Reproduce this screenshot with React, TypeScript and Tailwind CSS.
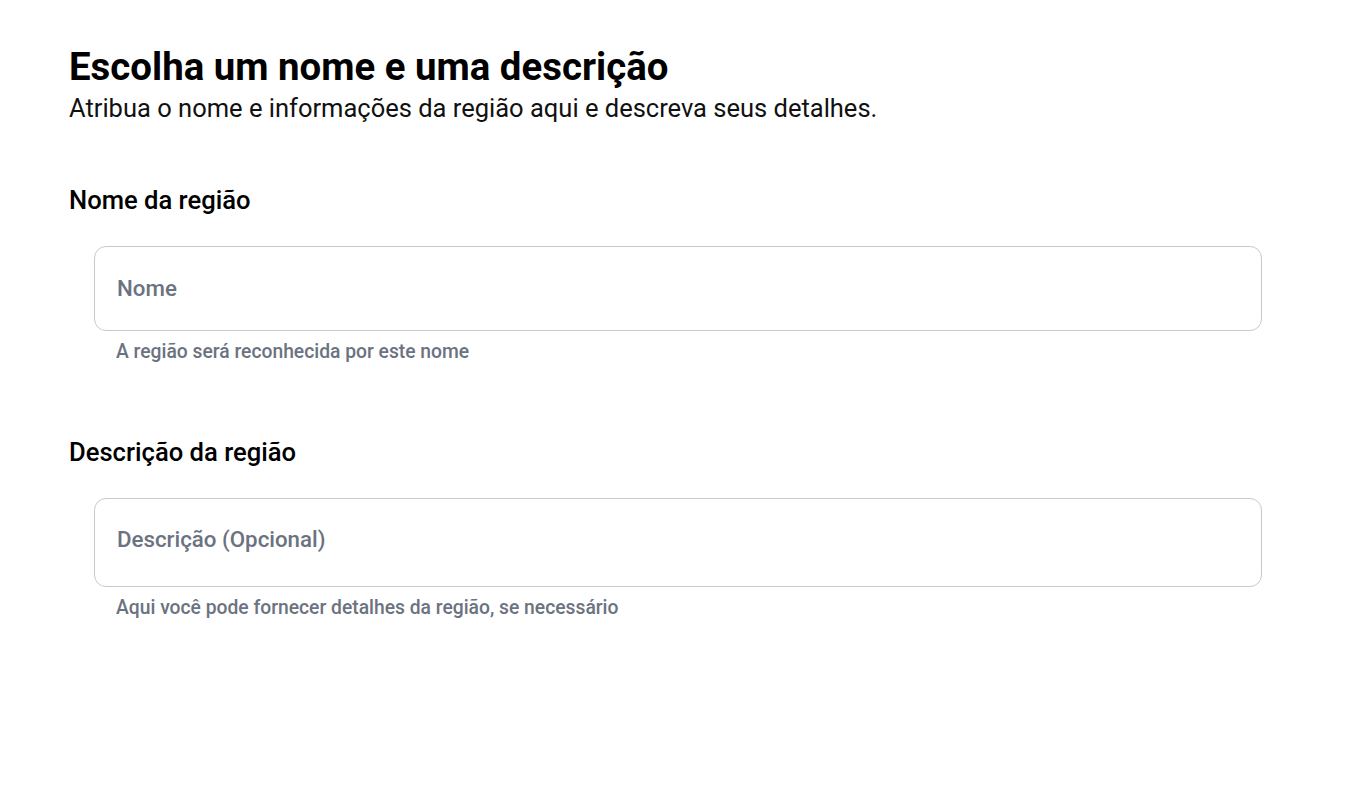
const FONT = "font-['Roboto','Liberation_Sans',sans-serif]";

function Field({
  label,
  placeholder,
  hint,
  box,
}: {
  label: string;
  placeholder: string;
  hint: string;
  box: string;
}) {
  return (
    <section>
      <h2 className="text-[25.6px] leading-[30px] font-medium text-black">{label}</h2>
      <div className="mt-[31px] ml-[25px] mr-[21px]">
        <div
          className={`${box} flex items-center rounded-[12px] border border-[#c9c9cc] bg-white px-[22px]`}
        >
          <span className="text-[22.3px] font-medium text-[#6b7280]">{placeholder}</span>
        </div>
        <p className="mt-[9px] ml-[22px] text-[19.3px] leading-[24px] font-medium text-[#6b7280]">
          {hint}
        </p>
      </div>
    </section>
  );
}

export default function App() {
  return (
    <div className={`${FONT} min-h-screen bg-white px-[69px] pt-[44px]`}>
      <h1 className="text-[38.4px] leading-[46px] font-bold text-black">
        Escolha um nome e uma descrição
      </h1>
      <p className="text-[25.5px] leading-[36px] text-[#111]">
        Atribua o nome e informações da região aqui e descreva seus detalhes.
      </p>

      <div className="mt-[59px] flex flex-col gap-[73px]">
        <Field
          label="Nome da região"
          placeholder="Nome"
          hint="A região será reconhecida por este nome"
          box="h-[85px]"
        />
        <Field
          label="Descrição da região"
          placeholder="Descrição (Opcional)"
          hint="Aqui você pode fornecer detalhes da região, se necessário"
          box="h-[89px] pb-[6px]"
        />
      </div>
    </div>
  );
}
